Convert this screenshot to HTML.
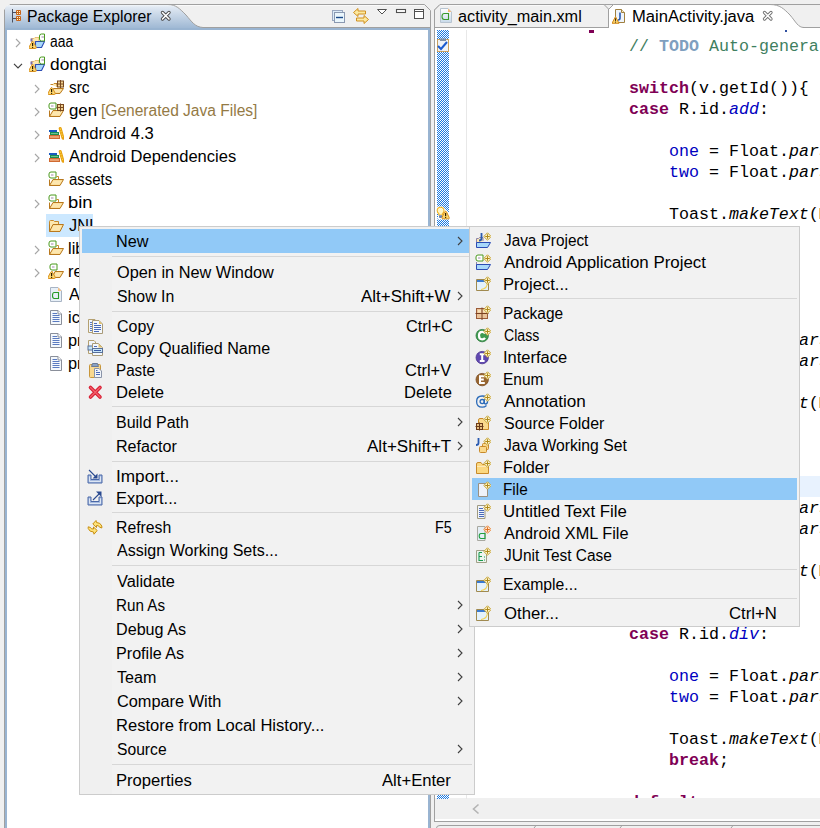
<!DOCTYPE html>
<html><head><meta charset="utf-8">
<style>
*{margin:0;padding:0;box-sizing:border-box}
html,body{width:820px;height:828px;overflow:hidden;background:#f0f0f0;font-family:"Liberation Sans",sans-serif;font-size:16px;color:#000;position:relative}
.abs{position:absolute}
.row{position:absolute;height:23px;line-height:23px;white-space:nowrap}
.mt{position:absolute;height:18px;line-height:18px;white-space:nowrap}
.code{position:absolute;font-family:"Liberation Mono",monospace;font-size:16.667px;line-height:21px;white-space:pre;color:#000}
.kw{color:#7f0055;font-weight:bold}
.fld{color:#0000c0}
.it{font-style:italic}
.cmt{color:#3f7f5f}
.todo{color:#7f9fbf;font-weight:bold}
.menu{position:absolute;background:#f0f0f0;border:1px solid #cccccc}
.hl{background:#91c9f7}
.sep{position:absolute;height:1px;background:#d7d7d7}
</style></head><body>
<!-- LEFT PANEL frame -->
<svg class="abs" style="left:0;top:0" width="440" height="828">
  <defs>
    <linearGradient id="tabg" x1="0" y1="0" x2="0" y2="1">
      <stop offset="0" stop-color="#f2f6fa"/>
      <stop offset="0.08" stop-color="#e1e9f3"/>
      <stop offset="1" stop-color="#99b4d1"/>
    </linearGradient>
  </defs>
  <path d="M4.5,828 L4.5,10 L10,4.5 L424.5,4.5 L430.5,10.5 L430.5,828" fill="#f0f0f0" stroke="#a0a0a0" stroke-width="1"/><path d="M10.5,5.5 H424" stroke="#fafafa"/>
  <path d="M5,30 L5,10 Q5,5 10,5 L168,5 C176,5 180,9 186,15 C192,22 195,27 203,27.5 L430,27.5 L430,30 Z" fill="url(#tabg)"/>
  <path d="M168,4.5 C176,4.5 180,9 186,15 C192,22 195,27 203,27.5 L430,27.5" fill="none" stroke="#a0a0a0" stroke-width="1"/>
  <rect x="5" y="28" width="425" height="2" fill="#99b4d1"/>
  <rect x="5" y="28" width="2" height="800" fill="#99b4d1"/>
  <rect x="428" y="28" width="2" height="800" fill="#99b4d1"/>
  <rect x="7" y="30" width="421" height="800" fill="#fff"/>
</svg>
<div class="abs" style="left:27.21px;top:5px;height:23px;line-height:23px;white-space:nowrap;transform:scaleX(0.9860);transform-origin:0 0;">Package Explorer</div>
<svg class="abs" style="left:15px;top:38px" width="6" height="10" viewBox="0 0 6 10"><path d="M1,1 L5,5 L1,9" fill="none" stroke="#a6a6a6" stroke-width="1.1"/></svg><svg class="abs" style="left:29px;top:33px" width="16" height="16" viewBox="0 0 16 16"><path d="M2.5,5.5 H5 L6,4.5 H10 V9 H2.5 Z" fill="#fde8b0" stroke="#e0b060" stroke-width="0.8"/><rect x="1.5" y="5.5" width="2" height="3" fill="#7a6aa8"/><path d="M6.5,8.5 H15.5 L12.5,14.5 H6.5 Z" fill="#a8d8fa" stroke="#2c4cb4" stroke-width="1.1" stroke-linejoin="round"/><path d="M12.5,1.0 H15.5 V8.0 H12.5 Q10.5,8.0 10.5,6.0 V3.0 Q10.5,1.0 12.5,1.0 Z" fill="#fff" stroke="#4a9a1e" stroke-width="1"/><rect x="12.5" y="3.5" width="2.5" height="1" fill="#a08aa8"/><path d="M3.6,8.6 Q4.2,8.6 4.6,9.4 L7.2,14.2 Q7.6,15.5 6.4,15.5 H0.8 Q-0.4,15.5 0,14.2 L2.6,9.4 Q3,8.6 3.6,8.6 Z" fill="#fcd770" stroke="#d8901e" stroke-width="1"/><rect x="3" y="10" width="1.2" height="3" fill="#2a1a00"/><rect x="3" y="13.8" width="1.2" height="1.1" fill="#2a1a00"/></svg><div class="abs" style="left:50.30px;top:30px;height:23px;line-height:23px;white-space:nowrap;transform:scaleX(0.8658);transform-origin:0 0;">aaa</div><svg class="abs" style="left:13px;top:63px" width="10" height="6" viewBox="0 0 10 6"><path d="M1,0.8 L5,4.8 L9,0.8" fill="none" stroke="#404040" stroke-width="1.2"/></svg><svg class="abs" style="left:29px;top:56px" width="16" height="16" viewBox="0 0 16 16"><path d="M2.5,5.5 H5 L6,4.5 H10 V9 H2.5 Z" fill="#fde8b0" stroke="#e0b060" stroke-width="0.8"/><rect x="1.5" y="5.5" width="2" height="3" fill="#7a6aa8"/><path d="M6.5,8.5 H15.5 L12.5,14.5 H6.5 Z" fill="#a8d8fa" stroke="#2c4cb4" stroke-width="1.1" stroke-linejoin="round"/><path d="M12.5,1.0 H15.5 V8.0 H12.5 Q10.5,8.0 10.5,6.0 V3.0 Q10.5,1.0 12.5,1.0 Z" fill="#fff" stroke="#4a9a1e" stroke-width="1"/><rect x="12.5" y="3.5" width="2.5" height="1" fill="#a08aa8"/><path d="M3.6,8.6 Q4.2,8.6 4.6,9.4 L7.2,14.2 Q7.6,15.5 6.4,15.5 H0.8 Q-0.4,15.5 0,14.2 L2.6,9.4 Q3,8.6 3.6,8.6 Z" fill="#fcd770" stroke="#d8901e" stroke-width="1"/><rect x="3" y="10" width="1.2" height="3" fill="#2a1a00"/><rect x="3" y="13.8" width="1.2" height="1.1" fill="#2a1a00"/></svg><div class="abs" style="left:50.30px;top:53px;height:23px;line-height:23px;white-space:nowrap;transform:scaleX(1.0821);transform-origin:0 0;">dongtai</div><svg class="abs" style="left:34px;top:84px" width="6" height="10" viewBox="0 0 6 10"><path d="M1,1 L5,5 L1,9" fill="none" stroke="#a6a6a6" stroke-width="1.1"/></svg><svg class="abs" style="left:48px;top:79px" width="16" height="16" viewBox="0 0 16 16"><path d="M2.5,5.5 H5 L6,4.5 H9 V8" fill="#fde8b0" stroke="#c88a2a"/><path d="M2.5,9.5 V14.5 H12 L15.5,9.5 H5.5 L2.5,14.5" fill="#fad98c" stroke="#b8781e"/><path d="M6,10.5 H14 L11.5,13.5 H4 Z" fill="#fde7b0"/><rect x="9.5" y="2.0" width="6" height="6" fill="#f0d090" stroke="#7a4a20"/><path d="M12.5,1.0 V9.0 M8.5,5.0 H16.5" stroke="#7a4a20"/><path d="M3.6,8.6 Q4.2,8.6 4.6,9.4 L7.2,14.2 Q7.6,15.5 6.4,15.5 H0.8 Q-0.4,15.5 0,14.2 L2.6,9.4 Q3,8.6 3.6,8.6 Z" fill="#fcd770" stroke="#d8901e" stroke-width="1"/><rect x="3" y="10" width="1.2" height="3" fill="#2a1a00"/><rect x="3" y="13.8" width="1.2" height="1.1" fill="#2a1a00"/></svg><div class="abs" style="left:69.20px;top:76px;height:23px;line-height:23px;white-space:nowrap;transform:scaleX(0.9565);transform-origin:0 0;">src</div><svg class="abs" style="left:34px;top:107px" width="6" height="10" viewBox="0 0 6 10"><path d="M1,1 L5,5 L1,9" fill="none" stroke="#a6a6a6" stroke-width="1.1"/></svg><svg class="abs" style="left:48px;top:102px" width="16" height="16" viewBox="0 0 16 16"><path d="M3.0,1.0 H8.0 V7.0 H3.0 Q1.0,7.0 1.0,5.0 V3.0 Q1.0,1.0 3.0,1.0 Z" fill="#fff" stroke="#4a9a1e" stroke-width="1"/><rect x="3.0" y="3.5" width="2.5" height="1" fill="#a08aa8"/><path d="M1.5,8.5 V14.5 H12 L15.5,8.5 H5 L1.5,14.5" fill="#fad98c" stroke="#b8781e"/><path d="M5.5,9.5 H14 L11.5,13.5 H3 Z" fill="#fde7b0"/><rect x="9.5" y="2.5" width="6" height="6" fill="#f0d090" stroke="#7a4a20"/><path d="M12.5,1.5 V9.5 M8.5,5.5 H16.5" stroke="#7a4a20"/></svg><div class="abs" style="left:69.20px;top:99px;height:23px;line-height:23px;white-space:nowrap;transform:scaleX(1.0505);transform-origin:0 0;">gen</div><div class="abs" style="left:100.73px;top:99px;height:23px;line-height:23px;white-space:nowrap;transform:scaleX(0.9716);transform-origin:0 0;color:#947a45">[Generated Java Files]</div><svg class="abs" style="left:34px;top:130px" width="6" height="10" viewBox="0 0 6 10"><path d="M1,1 L5,5 L1,9" fill="none" stroke="#a6a6a6" stroke-width="1.1"/></svg><svg class="abs" style="left:48px;top:125px" width="16" height="16" viewBox="0 0 16 16"><rect x="1" y="5" width="8" height="2" fill="#1a5ac0"/><rect x="2" y="7" width="9" height="3" fill="#1a9050"/><rect x="3" y="8" width="7" height="1" fill="#70c090"/><rect x="1" y="10" width="11" height="4" fill="#d06a30"/><rect x="2" y="11" width="9" height="2" fill="#e8a070"/><path d="M12.2,3.5 L15,13.2" stroke="#e8a010" stroke-width="3" stroke-linecap="round"/><path d="M12.2,3.5 L15,13.2" stroke="#f8d040" stroke-width="1.2" stroke-dasharray="1.5 1"/></svg><div class="abs" style="left:69.20px;top:122px;height:23px;line-height:23px;white-space:nowrap;transform:scaleX(1.0349);transform-origin:0 0;">Android 4.3</div><svg class="abs" style="left:34px;top:153px" width="6" height="10" viewBox="0 0 6 10"><path d="M1,1 L5,5 L1,9" fill="none" stroke="#a6a6a6" stroke-width="1.1"/></svg><svg class="abs" style="left:48px;top:148px" width="16" height="16" viewBox="0 0 16 16"><rect x="1" y="5" width="8" height="2" fill="#1a5ac0"/><rect x="2" y="7" width="9" height="3" fill="#1a9050"/><rect x="3" y="8" width="7" height="1" fill="#70c090"/><rect x="1" y="10" width="11" height="4" fill="#d06a30"/><rect x="2" y="11" width="9" height="2" fill="#e8a070"/><path d="M12.2,3.5 L15,13.2" stroke="#e8a010" stroke-width="3" stroke-linecap="round"/><path d="M12.2,3.5 L15,13.2" stroke="#f8d040" stroke-width="1.2" stroke-dasharray="1.5 1"/></svg><div class="abs" style="left:69.20px;top:145px;height:23px;line-height:23px;white-space:nowrap;transform:scaleX(1.0328);transform-origin:0 0;">Android Dependencies</div><svg class="abs" style="left:48px;top:171px" width="16" height="16" viewBox="0 0 16 16"><path d="M3.0,1.0 H8.0 V7.0 H3.0 Q1.0,7.0 1.0,5.0 V3.0 Q1.0,1.0 3.0,1.0 Z" fill="#fff" stroke="#4a9a1e" stroke-width="1"/><rect x="3.0" y="3.5" width="2.5" height="1" fill="#a08aa8"/><path d="M8.5,5.5 H10.5 V8" fill="none" stroke="#c88a2a"/><path d="M1.5,8.5 V14.5 H12 L15.5,8.5 H5 L1.5,14.5" fill="#fad98c" stroke="#b8781e"/><path d="M5.5,9.5 H14 L11.5,13.5 H3 Z" fill="#fde7b0"/></svg><div class="abs" style="left:69.20px;top:168px;height:23px;line-height:23px;white-space:nowrap;transform:scaleX(0.9342);transform-origin:0 0;">assets</div><svg class="abs" style="left:34px;top:199px" width="6" height="10" viewBox="0 0 6 10"><path d="M1,1 L5,5 L1,9" fill="none" stroke="#a6a6a6" stroke-width="1.1"/></svg><svg class="abs" style="left:48px;top:194px" width="16" height="16" viewBox="0 0 16 16"><path d="M3.0,1.0 H8.0 V7.0 H3.0 Q1.0,7.0 1.0,5.0 V3.0 Q1.0,1.0 3.0,1.0 Z" fill="#fff" stroke="#4a9a1e" stroke-width="1"/><rect x="3.0" y="3.5" width="2.5" height="1" fill="#a08aa8"/><path d="M8.5,5.5 H10.5 V8" fill="none" stroke="#c88a2a"/><path d="M1.5,8.5 V14.5 H12 L15.5,8.5 H5 L1.5,14.5" fill="#fad98c" stroke="#b8781e"/><path d="M5.5,9.5 H14 L11.5,13.5 H3 Z" fill="#fde7b0"/></svg><div class="abs" style="left:68.05px;top:191px;height:23px;line-height:23px;white-space:nowrap;transform:scaleX(1.1463);transform-origin:0 0;">bin</div><div class="abs" style="left:46px;top:214px;width:47px;height:23px;background:#cce8ff"></div><svg class="abs" style="left:48px;top:217px" width="16" height="16" viewBox="0 0 16 16"><path d="M1.5,13.5 V4.5 Q1.5,3.5 2.5,3.5 H5.5 L6.5,4.5 H10.5 V7.5" fill="#fde8b0" stroke="#c88a2a"/><path d="M1.5,7.5 V14.5 H12 L15.5,7.5 H5 L1.5,14.5" fill="#fad98c" stroke="#b8781e"/><path d="M5.5,8.5 H14 L11.5,13.5 H3 Z" fill="#fde7b0"/></svg><div class="abs" style="left:69.20px;top:214px;height:23px;line-height:23px;white-space:nowrap;transform:scaleX(1.0200);transform-origin:0 0;">JNI</div><svg class="abs" style="left:34px;top:245px" width="6" height="10" viewBox="0 0 6 10"><path d="M1,1 L5,5 L1,9" fill="none" stroke="#a6a6a6" stroke-width="1.1"/></svg><svg class="abs" style="left:48px;top:240px" width="16" height="16" viewBox="0 0 16 16"><path d="M3.0,1.0 H8.0 V7.0 H3.0 Q1.0,7.0 1.0,5.0 V3.0 Q1.0,1.0 3.0,1.0 Z" fill="#fff" stroke="#4a9a1e" stroke-width="1"/><rect x="3.0" y="3.5" width="2.5" height="1" fill="#a08aa8"/><path d="M8.5,5.5 H10.5 V8" fill="none" stroke="#c88a2a"/><path d="M1.5,8.5 V14.5 H12 L15.5,8.5 H5 L1.5,14.5" fill="#fad98c" stroke="#b8781e"/><path d="M5.5,9.5 H14 L11.5,13.5 H3 Z" fill="#fde7b0"/></svg><div class="abs" style="left:68.18px;top:237px;height:23px;line-height:23px;white-space:nowrap;transform:scaleX(1.0200);transform-origin:0 0;">libs</div><svg class="abs" style="left:34px;top:268px" width="6" height="10" viewBox="0 0 6 10"><path d="M1,1 L5,5 L1,9" fill="none" stroke="#a6a6a6" stroke-width="1.1"/></svg><svg class="abs" style="left:48px;top:263px" width="16" height="16" viewBox="0 0 16 16"><path d="M4.0,1.0 H9.0 V7.0 H4.0 Q2.0,7.0 2.0,5.0 V3.0 Q2.0,1.0 4.0,1.0 Z" fill="#fff" stroke="#4a9a1e" stroke-width="1"/><rect x="4.0" y="3.5" width="2.5" height="1" fill="#a08aa8"/><path d="M4.5,8.5 V14.5 H12 L15.5,8.5 H7 L4.5,14.5" fill="#fad98c" stroke="#b8781e"/><path d="M7.5,9.5 H14 L11.5,13.5 H5.5 Z" fill="#fde7b0"/><path d="M3.6,8.6 Q4.2,8.6 4.6,9.4 L7.2,14.2 Q7.6,15.5 6.4,15.5 H0.8 Q-0.4,15.5 0,14.2 L2.6,9.4 Q3,8.6 3.6,8.6 Z" fill="#fcd770" stroke="#d8901e" stroke-width="1"/><rect x="3" y="10" width="1.2" height="3" fill="#2a1a00"/><rect x="3" y="13.8" width="1.2" height="1.1" fill="#2a1a00"/></svg><div class="abs" style="left:68.18px;top:260px;height:23px;line-height:23px;white-space:nowrap;transform:scaleX(1.0200);transform-origin:0 0;">res</div><svg class="abs" style="left:48px;top:286px" width="16" height="16" viewBox="0 0 16 16"><path d="M2.5,1.5 H10 L13.5,5 V15.5 H2.5 Z" fill="#e8f0f8" stroke="#a8b4c4"/><path d="M10,1.5 V5 H13.5 Z" fill="#f8c080"/><path d="M6.2,6.5 H10.5 V12.5 H6.2 Q4.5,12.5 4.5,9.5 Q4.5,6.5 6.2,6.5 Z" fill="none" stroke="#2a9a2a" stroke-width="1.1"/></svg><div class="abs" style="left:69.20px;top:283px;height:23px;line-height:23px;white-space:nowrap;transform:scaleX(1.0200);transform-origin:0 0;">AndroidManifest.xml</div><svg class="abs" style="left:48px;top:309px" width="16" height="16" viewBox="0 0 16 16"><path d="M2.5,1.5 H10 L13.5,5 V15.5 H2.5 Z" fill="#f4f8fc" stroke="#8a8f9a"/><path d="M10,1.5 V5 H13.5" fill="#fff" stroke="#8a8f9a"/><path d="M4.5,4.5 H9 M4.5,6.5 H11.5 M4.5,8.5 H11.5 M4.5,10.5 H11.5 M4.5,12.5 H11.5" stroke="#5a7ac0"/></svg><div class="abs" style="left:68.18px;top:306px;height:23px;line-height:23px;white-space:nowrap;transform:scaleX(1.0200);transform-origin:0 0;">ic_launcher-web.png</div><svg class="abs" style="left:48px;top:332px" width="16" height="16" viewBox="0 0 16 16"><path d="M2.5,1.5 H10 L13.5,5 V15.5 H2.5 Z" fill="#f4f8fc" stroke="#8a8f9a"/><path d="M10,1.5 V5 H13.5" fill="#fff" stroke="#8a8f9a"/><path d="M4.5,4.5 H9 M4.5,6.5 H11.5 M4.5,8.5 H11.5 M4.5,10.5 H11.5 M4.5,12.5 H11.5" stroke="#5a7ac0"/></svg><div class="abs" style="left:68.18px;top:329px;height:23px;line-height:23px;white-space:nowrap;transform:scaleX(1.0200);transform-origin:0 0;">proguard-project.txt</div><svg class="abs" style="left:48px;top:355px" width="16" height="16" viewBox="0 0 16 16"><path d="M2.5,1.5 H10 L13.5,5 V15.5 H2.5 Z" fill="#f4f8fc" stroke="#8a8f9a"/><path d="M10,1.5 V5 H13.5" fill="#fff" stroke="#8a8f9a"/><path d="M4.5,4.5 H9 M4.5,6.5 H11.5 M4.5,8.5 H11.5 M4.5,10.5 H11.5 M4.5,12.5 H11.5" stroke="#5a7ac0"/></svg><div class="abs" style="left:68.18px;top:352px;height:23px;line-height:23px;white-space:nowrap;transform:scaleX(1.0200);transform-origin:0 0;">project.properties</div>

<!-- EDITOR frame -->
<svg class="abs" style="left:430px;top:0" width="390" height="828">
  <path d="M4.5,828 L4.5,10 L10,4.5 L390,4.5" fill="#f0f0f0" stroke="#a0a0a0"/>
</svg>
<div class="abs" style="left:435px;top:28px;width:385px;height:770px;background:#fff;overflow:hidden">
  <div class="abs" style="left:0;top:448px;width:385px;height:21px;background:#e8f2fe"></div>
  <div class="abs" style="left:154px;top:2px;width:5px;height:3px;background:#7f0055"></div><div class="abs" style="left:350px;top:2px;width:2px;height:2px;background:#3050a0"></div><div class="code" style="left:34px;top:8px">                <span class="cmt">// </span><span class="todo">TODO</span><span class="cmt"> Auto-generated method stub</span>

                <span class="kw">switch</span>(v.getId()){
                <span class="kw">case</span> R.id.<span class="fld it">add</span>:

                    <span class="fld">one</span> = Float.<span class="it">parseFloat</span>(et1.getText().toString());
                    <span class="fld">two</span> = Float.<span class="it">parseFloat</span>(et1.getText().toString());

                    Toast.<span class="it">makeText</span>(MainActivity.this, "", Toast.LENGTH_SHORT).show();
                    <span class="kw">break</span>;

                <span class="kw">case</span> R.id.<span class="fld it">sub</span>:


                    <span class="fld">one</span> = Float.<span class="it">parseFloat</span>(et1.getText().toString());
                    <span class="fld">two</span> = Float.<span class="it">parseFloat</span>(et1.getText().toString());

                    Toast.<span class="it">makeText</span>(MainActivity.this, "", Toast.LENGTH_SHORT).show();
                    <span class="kw">break</span>;

                <span class="kw">case</span> R.id.<span class="fld it">mul</span>:

                    <span class="fld">one</span> = Float.<span class="it">parseFloat</span>(et1.getText().toString());
                    <span class="fld">two</span> = Float.<span class="it">parseFloat</span>(et1.getText().toString());

                    Toast.<span class="it">makeText</span>(MainActivity.this, "", Toast.LENGTH_SHORT).show();
                    <span class="kw">break</span>;

                <span class="kw">case</span> R.id.<span class="fld it">div</span>:

                    <span class="fld">one</span> = Float.<span class="it">parseFloat</span>(et1.getText().toString());
                    <span class="fld">two</span> = Float.<span class="it">parseFloat</span>(et1.getText().toString());

                    Toast.<span class="it">makeText</span>(MainActivity.this, "", Toast.LENGTH_SHORT).show();
                    <span class="kw">break</span>;

                <span class="kw">default</span>:</div>
</div>


<!-- left header icons -->
<svg class="abs" style="left:8px;top:4px" width="20" height="22"><path d="M4.5,5 V18.5 M4.5,8.5 H8 M4.5,14.5 H8" stroke="#4a5060" stroke-width="1"/><rect x="8" y="6" width="5" height="5" rx="1" fill="#c8641a"/><rect x="8" y="12" width="5" height="5" rx="1" fill="#c8641a"/><g fill="#fff6c0"><rect x="9" y="7" width="1" height="1"/><rect x="11" y="7" width="1" height="1"/><rect x="9" y="9" width="1" height="1"/><rect x="11" y="9" width="1" height="1"/><rect x="9" y="13" width="1" height="1"/><rect x="11" y="13" width="1" height="1"/><rect x="9" y="15" width="1" height="1"/><rect x="11" y="15" width="1" height="1"/></g></svg>
<svg class="abs" style="left:160px;top:10px" width="12" height="12"><path d="M2.5,2.5 L9,9 M9,2.5 L2.5,9" stroke="#4a4a4a" stroke-width="3.4" stroke-linecap="round"/><path d="M2.5,2.5 L9,9 M9,2.5 L2.5,9" stroke="#fff" stroke-width="1.6" stroke-linecap="round"/></svg>
<svg class="abs" style="left:328px;top:4px" width="104" height="24">
 <rect x="4.5" y="6.5" width="10" height="10" fill="#dcecf8" stroke="#9aa8c0"/>
 <rect x="6.5" y="8.5" width="10" height="10" fill="#eaf6fc" stroke="#8a98b0"/>
 <path d="M8,13.5 H15" stroke="#1a4a8a" stroke-width="1.4"/>
 <path d="M25.5,8.5 L30,4.5 V7 H37.5 V10 H30 V12.5 Z" fill="#fce9a0" stroke="#d09020" stroke-linejoin="round"/>
 <path d="M40.5,15.5 L36,11.5 V14 H28.5 V17 H36 V19.5 Z" fill="#fce9a0" stroke="#d09020" stroke-linejoin="round"/>
 <path d="M49.5,5.5 H58.5 L54,10 Z" fill="#fff" stroke="#505050" stroke-linejoin="round"/>
 <rect x="68.5" y="5.5" width="9" height="3" fill="#fff" stroke="#505050" stroke-width="1.1"/>
 <rect x="86.5" y="5.5" width="9" height="9" fill="#fff" stroke="#505050"/>
 <path d="M86.5,7.5 H95.5" stroke="#505050" stroke-width="1"/>
</svg>

<!-- EDITOR tabs -->
<svg class="abs" style="left:430px;top:0" width="390" height="30">
 <!-- active tab white -->
 <path d="M179,28 V9 L183.5,4.5 L340,4.5 C350,4.5 354,9 360,15 C366,22 368,27.5 374,27.5 L390,27.5 V28 Z" fill="#fff"/>
 <path d="M179,9 L183.5,4.5 L340,4.5 C350,4.5 354,9 360,15 C366,22 368,27.5 374,27.5 L390,27.5" fill="none" stroke="#a0a0a0"/>
 <!-- inactive tab -->
 <path d="M4.5,28 V10 L10,4.5 L174,4.5 L178.5,9 V27.5 H4.5" fill="#f0f0f0" stroke="#a0a0a0"/><path d="M10.5,5.5 H173.5" stroke="#fafafa"/>
 <rect x="4" y="27" width="175" height="1" fill="#a0a0a0"/>
</svg>
<svg class="abs" style="left:430px;top:0" width="390" height="30"><path d="M373,27.5 H390" stroke="#a0a0a0"/><rect x="373" y="5" width="17" height="22" fill="#f0f0f0" opacity="0"/></svg>

<div class="abs" style="left:458.00px;top:5px;height:23px;line-height:23px;white-space:nowrap;transform:scaleX(1.0161);transform-origin:0 0;">activity_main.xml</div>
<div class="abs" style="left:631.66px;top:5px;height:23px;line-height:23px;white-space:nowrap;transform:scaleX(1.0371);transform-origin:0 0;">MainActivity.java</div>
<svg class="abs" style="left:438px;top:7px" width="16" height="16"><defs><linearGradient id="xg" x1="0" y1="0" x2="0" y2="1"><stop offset="0" stop-color="#ffffff"/><stop offset="1" stop-color="#c8daea"/></linearGradient></defs><path d="M2.5,1.5 H10 L13.5,5 V15.5 H2.5 Z" fill="url(#xg)" stroke="#b8c4d0"/><path d="M10,1.5 V5 H13.5 Z" fill="#f4b878"/><path d="M6.2,6.5 H10.5 V12.5 H6.2 Q4,12.5 4,9.5 Q4,6.5 6.2,6.5 Z" fill="none" stroke="#3a9a2a" stroke-width="1.1"/></svg>
<svg class="abs" style="left:612px;top:8px" width="16" height="16"><path d="M3.5,1.5 H9.5 L12.5,4.5 V14.5 H3.5 Z" fill="#eef4fb" stroke="#a08040"/><path d="M9.5,1.5 V4.5 H12.5" fill="#f8e8c0" stroke="#a08040"/><path d="M8,4.5 V10 Q8,12 6,12" fill="none" stroke="#2a5ab0" stroke-width="1.6"/><path d="M3.5,8.6 L7,15.3 H0 Z" fill="#fbd36b" stroke="#d18a1c" stroke-linejoin="round"/><rect x="3" y="10.3" width="1" height="2.6" fill="#3a2a10"/><rect x="3" y="13.6" width="1" height="1" fill="#3a2a10"/></svg>
<svg class="abs" style="left:762px;top:10px" width="12" height="12"><path d="M2.5,2.5 L9,9 M9,2.5 L2.5,9" stroke="#6e6e6e" stroke-width="3.2" stroke-linecap="round"/><path d="M2.5,2.5 L9,9 M9,2.5 L2.5,9" stroke="#fff" stroke-width="1.5" stroke-linecap="round"/></svg>
<!-- ruler -->
<svg class="abs" style="left:437px;top:30px" width="12" height="769"><defs><pattern id="dots" width="2" height="2" patternUnits="userSpaceOnUse"><rect x="0" y="0" width="1" height="1" fill="#1a78e0"/><rect x="1" y="1" width="1" height="1" fill="#1a78e0"/><rect x="1" y="0" width="1" height="1" fill="#fff"/><rect x="0" y="1" width="1" height="1" fill="#fff"/></pattern></defs><rect width="12" height="769" fill="url(#dots)"/></svg>
<div class="abs" style="left:466px;top:30px;width:1px;height:769px;background:#e8e8e8"></div>
<!-- task icon on ruler -->
<svg class="abs" style="left:435px;top:36px" width="16" height="16"><rect x="2.5" y="3.5" width="11" height="12" fill="#eef2f8" stroke="#c8a060"/><path d="M5,2.5 H11 V5 H5 Z" fill="#8090a8"/><path d="M3,10 L6,13 L12,6" fill="none" stroke="#1a5ad0" stroke-width="2"/></svg>
<!-- quickfix warning icon -->
<svg class="abs" style="left:436px;top:206px" width="16" height="16"><path d="M1,0.6 H7 L13,6.6 V13.6 H1 Z" fill="#fff"/><path d="M1.5,8 V12.5" stroke="#1a78e0" stroke-dasharray="1 1"/><path d="M4.6,1.2 Q8,1.2 8,4.4 Q8,6.4 6.4,7.6 V9 H2.8 V7.6 Q1.2,6.4 1.2,4.4 Q1.2,1.2 4.6,1.2 Z" fill="#fff6c8" stroke="#f0b428" stroke-width="1.1"/><path d="M3,9.2 H6.2 V11.5 Q4.6,12.6 3,11.5 Z" fill="#6a84b8"/><path d="M9.6,5.2 Q10.2,5.2 10.6,6 L13.2,11.6 Q13.6,12.8 12.4,12.8 H6.8 Q5.6,12.8 6,11.6 L8.6,6 Q9,5.2 9.6,5.2 Z" fill="#fcd770" stroke="#d8901e"/><rect x="9" y="7" width="1.2" height="3" fill="#2a1a00"/><rect x="9" y="10.8" width="1.2" height="1.1" fill="#2a1a00"/></svg>
<!-- horizontal scrollbar -->
<div class="abs" style="left:437px;top:799px;width:383px;height:20px;background:#f0f0f0"></div>
<svg class="abs" style="left:470px;top:803px" width="12" height="12"><path d="M8.5,1.5 L3.5,6 L8.5,10.5" fill="none" stroke="#b4b4b4" stroke-width="1.6"/></svg>
<div class="abs" style="left:435px;top:819px;width:385px;height:2px;background:#fff"></div>
<div class="abs" style="left:434px;top:821px;width:386px;height:1px;background:#a0a0a0"></div>
<div class="abs" style="left:431px;top:822px;width:389px;height:6px;background:#f0f0f0"></div>
<svg class="abs" style="left:430px;top:822px" width="390" height="6"><path d="M6.5,6 Q6.5,3.5 10,3.5 L390,3.5" fill="none" stroke="#a0a0a0"/><path d="M104,6 L106,3.5 M190,6 L192,3.5 M301,6 L303,3.5" stroke="#a0a0a0"/></svg>

<!-- MAIN MENU -->
<div class="menu" style="left:79px;top:226px;width:396px;height:569px"><div class="abs" style="left:32px;top:0;width:362px;height:567px;background:#f2f2f2"></div></div>
<div class="abs hl" style="left:82px;top:229px;width:390px;height:24px"></div><div class="abs" style="left:115.59px;top:233px;height:18px;line-height:18px;white-space:nowrap;transform:scaleX(1.0142);transform-origin:0 0;">New</div><svg class="abs" style="left:456.5px;top:236px" width="6" height="10" viewBox="0 0 6 10"><path d="M1,1 L5,5 L1,9" fill="none" stroke="#404040" stroke-width="1.1"/></svg><div class="sep" style="left:112px;top:256px;width:360px"></div><div class="abs" style="left:116.60px;top:264px;height:18px;line-height:18px;white-space:nowrap;transform:scaleX(1.0195);transform-origin:0 0;">Open in New Window</div><div class="abs" style="left:116.60px;top:288px;height:18px;line-height:18px;white-space:nowrap;transform:scaleX(0.9892);transform-origin:0 0;">Show In</div><div class="abs" style="left:361.40px;top:288px;height:18px;line-height:18px;white-space:nowrap;transform:scaleX(1.0589);transform-origin:0 0;">Alt+Shift+W</div><svg class="abs" style="left:456.5px;top:291px" width="6" height="10" viewBox="0 0 6 10"><path d="M1,1 L5,5 L1,9" fill="none" stroke="#404040" stroke-width="1.1"/></svg><div class="sep" style="left:112px;top:311px;width:360px"></div><div class="abs" style="left:116.60px;top:318px;height:18px;line-height:18px;white-space:nowrap;transform:scaleX(0.9986);transform-origin:0 0;">Copy</div><div class="abs" style="left:405.60px;top:318px;height:18px;line-height:18px;white-space:nowrap;transform:scaleX(1.0215);transform-origin:0 0;">Ctrl+C</div><svg class="abs" style="left:87px;top:318px" width="16" height="16" viewBox="0 0 16 16"><path d="M1.5,1.5 H8 L9.5,3 V14.5 H1.5 Z" fill="#f0f4fa" stroke="#b4a070"/><path d="M3,4.5 H6 M3,6.5 H6 M3,8.5 H6 M3,10.5 H6 M3,12.5 H6" stroke="#5a7ac0"/><path d="M5.5,2.5 H12 L15.5,6 V15.5 H5.5 Z" fill="#f4f8fd" stroke="#a89a78"/><path d="M12,2.5 V6 H15.5 Z" fill="#e0c070"/><path d="M7,5.5 H10 M7,7.5 H14 M7,9.5 H14 M7,11.5 H14 M7,13.5 H12" stroke="#4a6ab8"/></svg><div class="abs" style="left:116.60px;top:340px;height:18px;line-height:18px;white-space:nowrap;transform:scaleX(1.0068);transform-origin:0 0;">Copy Qualified Name</div><svg class="abs" style="left:87px;top:340px" width="16" height="16" viewBox="0 0 16 16"><path d="M1.5,0.5 H7 L8.5,2 V13.5 H1.5 Z" fill="#f0f4fa" stroke="#b4a070"/><rect x="1" y="6" width="8" height="4" fill="#c0e4f8" stroke="#5a7098"/><path d="M5.5,3.5 H11.5 L15.5,7.5 V15.5 H5.5 Z" fill="#f4f8fd" stroke="#a89a78"/><path d="M11.5,3.5 V7.5 H15.5 Z" fill="#e0c070"/><path d="M7,6.5 H10" stroke="#4a6ab8"/><rect x="5.5" y="8.5" width="10" height="4" fill="#c8e8fa" stroke="#5a7098"/><path d="M7,10.5 H14" stroke="#3a5aa8"/></svg><div class="abs" style="left:115.65px;top:362px;height:18px;line-height:18px;white-space:nowrap;transform:scaleX(0.9496);transform-origin:0 0;">Paste</div><div class="abs" style="left:405.30px;top:362px;height:18px;line-height:18px;white-space:nowrap;transform:scaleX(1.0282);transform-origin:0 0;">Ctrl+V</div><svg class="abs" style="left:87px;top:362px" width="16" height="16" viewBox="0 0 16 16"><rect x="2.5" y="2.5" width="11" height="13" rx="1" fill="#f8d890" stroke="#c8963a"/><path d="M4.5,4.5 L5.5,1.5 H10.5 L11.5,4.5 Z" fill="#8aa2c4" stroke="#6a7a98"/><path d="M7.5,6.5 H12 L14.5,9 V15.5 H7.5 Z" fill="#f0f4fa" stroke="#8a94a8"/><path d="M9,8.5 H10.5 M9,10.5 H13 M9,12.5 H13" stroke="#4a6ab8"/></svg><div class="abs" style="left:115.56px;top:384px;height:18px;line-height:18px;white-space:nowrap;transform:scaleX(1.0386);transform-origin:0 0;">Delete</div><div class="abs" style="left:403.87px;top:384px;height:18px;line-height:18px;white-space:nowrap;transform:scaleX(1.0341);transform-origin:0 0;">Delete</div><svg class="abs" style="left:87px;top:384px" width="16" height="16" viewBox="0 0 16 16"><path d="M3.5,3.5 L13,13 M13,3.5 L3.5,13" stroke="#d81e34" stroke-width="3.6" stroke-linecap="round"/><path d="M3.5,3.5 L13,13 M13,3.5 L3.5,13" stroke="#f2606a" stroke-width="1.4" stroke-linecap="round"/></svg><div class="sep" style="left:112px;top:406px;width:360px"></div><div class="abs" style="left:115.60px;top:414px;height:18px;line-height:18px;white-space:nowrap;transform:scaleX(0.9995);transform-origin:0 0;">Build Path</div><svg class="abs" style="left:456.5px;top:417px" width="6" height="10" viewBox="0 0 6 10"><path d="M1,1 L5,5 L1,9" fill="none" stroke="#404040" stroke-width="1.1"/></svg><div class="abs" style="left:115.59px;top:438px;height:18px;line-height:18px;white-space:nowrap;transform:scaleX(1.0060);transform-origin:0 0;">Refactor</div><div class="abs" style="left:367.30px;top:438px;height:18px;line-height:18px;white-space:nowrap;transform:scaleX(1.0646);transform-origin:0 0;">Alt+Shift+T</div><svg class="abs" style="left:456.5px;top:441px" width="6" height="10" viewBox="0 0 6 10"><path d="M1,1 L5,5 L1,9" fill="none" stroke="#404040" stroke-width="1.1"/></svg><div class="sep" style="left:112px;top:461px;width:360px"></div><div class="abs" style="left:115.52px;top:468px;height:18px;line-height:18px;white-space:nowrap;transform:scaleX(1.0759);transform-origin:0 0;">Import...</div><svg class="abs" style="left:87px;top:468px" width="16" height="16" viewBox="0 0 16 16"><path d="M1,7 H4 V11.5 H12 V7 H15 V15 H1 Z" fill="#a8bce0" stroke="#4a68a8"/><path d="M2.5,8.5 V13.5 H13.5 V8.5" fill="none" stroke="#dce6f4"/><path d="M2,2 L8.5,8.5" stroke="#2a4a90" stroke-width="1.1"/><path d="M10.5,5.5 V10.5 H5.5 Z" fill="#2a4a90"/></svg><div class="abs" style="left:115.57px;top:490px;height:18px;line-height:18px;white-space:nowrap;transform:scaleX(1.0292);transform-origin:0 0;">Export...</div><svg class="abs" style="left:87px;top:490px" width="16" height="16" viewBox="0 0 16 16"><path d="M1,7 H4 V11.5 H12 V7 H15 V15 H1 Z" fill="#a8bce0" stroke="#4a68a8"/><path d="M2.5,8.5 V13.5 H13.5 V8.5" fill="none" stroke="#dce6f4"/><path d="M6,10 L12.5,3.5" stroke="#2a4a90" stroke-width="1.1"/><path d="M9,1.5 H14.5 V7 Z" fill="#2a4a90"/></svg><div class="sep" style="left:112px;top:512px;width:360px"></div><div class="abs" style="left:115.61px;top:519px;height:18px;line-height:18px;white-space:nowrap;transform:scaleX(0.9866);transform-origin:0 0;">Refresh</div><div class="abs" style="left:435.01px;top:519px;height:18px;line-height:18px;white-space:nowrap;transform:scaleX(0.8946);transform-origin:0 0;">F5</div><svg class="abs" style="left:87px;top:519px" width="16" height="16" viewBox="0 0 16 16"><path d="M5.8,5 L9,1.5 L9.5,3.5 Q13.5,3.5 14.8,7 V9 L12.5,8.2 Q12,6.3 9.5,6.5 L9.5,8.5 Z" fill="#fde27a" stroke="#c88e10" stroke-width="1" stroke-linejoin="round"/><path d="M10.2,11.5 L7,15.2 L6.5,13 Q2.5,13 1.2,9.5 V7.8 L3.5,8.5 Q4,10.3 6.5,10 L6.5,8 Z" fill="#fde27a" stroke="#c88e10" stroke-width="1" stroke-linejoin="round"/></svg><div class="abs" style="left:116.60px;top:542px;height:18px;line-height:18px;white-space:nowrap;transform:scaleX(1.0031);transform-origin:0 0;">Assign Working Sets...</div><div class="sep" style="left:112px;top:565px;width:360px"></div><div class="abs" style="left:116.60px;top:573px;height:18px;line-height:18px;white-space:nowrap;transform:scaleX(1.0223);transform-origin:0 0;">Validate</div><div class="abs" style="left:115.65px;top:597px;height:18px;line-height:18px;white-space:nowrap;transform:scaleX(0.9501);transform-origin:0 0;">Run As</div><svg class="abs" style="left:456.5px;top:600px" width="6" height="10" viewBox="0 0 6 10"><path d="M1,1 L5,5 L1,9" fill="none" stroke="#404040" stroke-width="1.1"/></svg><div class="abs" style="left:115.59px;top:621px;height:18px;line-height:18px;white-space:nowrap;transform:scaleX(1.0092);transform-origin:0 0;">Debug As</div><svg class="abs" style="left:456.5px;top:624px" width="6" height="10" viewBox="0 0 6 10"><path d="M1,1 L5,5 L1,9" fill="none" stroke="#404040" stroke-width="1.1"/></svg><div class="abs" style="left:115.59px;top:645px;height:18px;line-height:18px;white-space:nowrap;transform:scaleX(1.0079);transform-origin:0 0;">Profile As</div><svg class="abs" style="left:456.5px;top:648px" width="6" height="10" viewBox="0 0 6 10"><path d="M1,1 L5,5 L1,9" fill="none" stroke="#404040" stroke-width="1.1"/></svg><div class="abs" style="left:116.60px;top:669px;height:18px;line-height:18px;white-space:nowrap;transform:scaleX(1.0052);transform-origin:0 0;">Team</div><svg class="abs" style="left:456.5px;top:672px" width="6" height="10" viewBox="0 0 6 10"><path d="M1,1 L5,5 L1,9" fill="none" stroke="#404040" stroke-width="1.1"/></svg><div class="abs" style="left:116.60px;top:693px;height:18px;line-height:18px;white-space:nowrap;transform:scaleX(1.0202);transform-origin:0 0;">Compare With</div><svg class="abs" style="left:456.5px;top:696px" width="6" height="10" viewBox="0 0 6 10"><path d="M1,1 L5,5 L1,9" fill="none" stroke="#404040" stroke-width="1.1"/></svg><div class="abs" style="left:115.57px;top:717px;height:18px;line-height:18px;white-space:nowrap;transform:scaleX(1.0342);transform-origin:0 0;">Restore from Local History...</div><div class="abs" style="left:116.60px;top:741px;height:18px;line-height:18px;white-space:nowrap;transform:scaleX(0.9784);transform-origin:0 0;">Source</div><svg class="abs" style="left:456.5px;top:744px" width="6" height="10" viewBox="0 0 6 10"><path d="M1,1 L5,5 L1,9" fill="none" stroke="#404040" stroke-width="1.1"/></svg><div class="sep" style="left:112px;top:764px;width:360px"></div><div class="abs" style="left:115.56px;top:772px;height:18px;line-height:18px;white-space:nowrap;transform:scaleX(1.0386);transform-origin:0 0;">Properties</div><div class="abs" style="left:382.20px;top:772px;height:18px;line-height:18px;white-space:nowrap;transform:scaleX(1.0399);transform-origin:0 0;">Alt+Enter</div>
<!-- SUB MENU -->
<div class="menu" style="left:469px;top:226px;width:331px;height:401px"><div class="abs" style="left:30px;top:0;width:299px;height:399px;background:#f2f2f2"></div></div>
<div class="abs" style="left:504.40px;top:232px;height:18px;line-height:18px;white-space:nowrap;transform:scaleX(0.9583);transform-origin:0 0;">Java Project</div><svg class="abs" style="left:475px;top:232px" width="16" height="16" viewBox="0 0 16 16"><path d="M1.5,13 V6.5 H3.5 L4.5,5.5 H8 V9" fill="#fde8b0" stroke="#8a82a8"/><path d="M1.5,10.5 H15.5 L12.5,15.5 H1.5 Z" fill="#a8d8fa" stroke="#2c4cb4" stroke-linejoin="round"/><path d="M6.5,1 V6.5 Q6.5,8.5 4,8.5" fill="none" stroke="#2a5ab0" stroke-width="1.8"/><path d="M12.5,0.8 L16.2,4.5 L12.5,8.2 L8.8,4.5 Z" fill="#fff8d8" stroke="#c4a030" stroke-width="1" stroke-linejoin="round"/><path d="M12.5,2.2 V6.8 M10.2,4.5 H14.8" stroke="#b08a18" stroke-width="1.1"/></svg><div class="abs" style="left:504.40px;top:254px;height:18px;line-height:18px;white-space:nowrap;transform:scaleX(1.0562);transform-origin:0 0;">Android Application Project</div><svg class="abs" style="left:475px;top:254px" width="16" height="16" viewBox="0 0 16 16"><path d="M3.0,1.0 H8.0 V7.0 H3.0 Q1.0,7.0 1.0,5.0 V3.0 Q1.0,1.0 3.0,1.0 Z" fill="#fff" stroke="#4a9a1e" stroke-width="1"/><rect x="3.0" y="3.5" width="2.5" height="1" fill="#a08aa8"/><path d="M1.5,13 V8" stroke="#8a82a8"/><path d="M1.5,10.5 H15.5 L12.5,15.5 H1.5 Z" fill="#a8d8fa" stroke="#2c4cb4" stroke-linejoin="round"/><path d="M12.5,0.8 L16.2,4.5 L12.5,8.2 L8.8,4.5 Z" fill="#fff8d8" stroke="#c4a030" stroke-width="1" stroke-linejoin="round"/><path d="M12.5,2.2 V6.8 M10.2,4.5 H14.8" stroke="#b08a18" stroke-width="1.1"/></svg><div class="abs" style="left:503.36px;top:276px;height:18px;line-height:18px;white-space:nowrap;transform:scaleX(1.0414);transform-origin:0 0;">Project...</div><svg class="abs" style="left:475px;top:276px" width="16" height="16" viewBox="0 0 16 16"><path d="M1.5,3.5 H13.5 V14.5 H1.5 Z" fill="#e4f2fc" stroke="#a08a50"/><rect x="2" y="4" width="11" height="2" fill="#3a7ad0"/><path d="M12.5,6 Q12.5,13 6,13.5" fill="none" stroke="#f4d050" stroke-width="1.1"/><path d="M12.5,0.8 L16.2,4.5 L12.5,8.2 L8.8,4.5 Z" fill="#fff8d8" stroke="#c4a030" stroke-width="1" stroke-linejoin="round"/><path d="M12.5,2.2 V6.8 M10.2,4.5 H14.8" stroke="#b08a18" stroke-width="1.1"/></svg><div class="sep" style="left:500px;top:298px;width:297px"></div><div class="abs" style="left:503.44px;top:305px;height:18px;line-height:18px;white-space:nowrap;transform:scaleX(0.9647);transform-origin:0 0;">Package</div><svg class="abs" style="left:475px;top:305px" width="16" height="16" viewBox="0 0 16 16"><rect x="1.5" y="3.5" width="11" height="10" fill="#eac49a" stroke="#9a5a38"/><path d="M7,2.5 V15 M0.5,8.5 H13.5" stroke="#7a4020"/><rect x="3" y="5" width="3" height="2.5" fill="#f8e0b8"/><rect x="8" y="5" width="3" height="2.5" fill="#f8e0b8"/><path d="M12.5,0.8 L16.2,4.5 L12.5,8.2 L8.8,4.5 Z" fill="#fff8d8" stroke="#c4a030" stroke-width="1" stroke-linejoin="round"/><path d="M12.5,2.2 V6.8 M10.2,4.5 H14.8" stroke="#b08a18" stroke-width="1.1"/></svg><div class="abs" style="left:504.40px;top:327px;height:18px;line-height:18px;white-space:nowrap;transform:scaleX(0.8823);transform-origin:0 0;">Class</div><svg class="abs" style="left:475px;top:327px" width="16" height="16" viewBox="0 0 16 16"><circle cx="7.2" cy="8.6" r="6.2" fill="#3e9a50" stroke="#2a7a3a" stroke-width="0.8"/><path d="M10,6.5 Q9,4.8 7.2,4.8 Q4,4.8 4,8.6 Q4,12.4 7.2,12.4 Q9,12.4 10,10.8" fill="none" stroke="#fff" stroke-width="2.2"/><path d="M12.5,0.8 L16.2,4.5 L12.5,8.2 L8.8,4.5 Z" fill="#fff8d8" stroke="#c4a030" stroke-width="1" stroke-linejoin="round"/><path d="M12.5,2.2 V6.8 M10.2,4.5 H14.8" stroke="#b08a18" stroke-width="1.1"/></svg><div class="abs" style="left:503.37px;top:349px;height:18px;line-height:18px;white-space:nowrap;transform:scaleX(1.0300);transform-origin:0 0;">Interface</div><svg class="abs" style="left:475px;top:349px" width="16" height="16" viewBox="0 0 16 16"><circle cx="7.2" cy="8.6" r="6.2" fill="#6048b0" stroke="#4a3490" stroke-width="0.8"/><path d="M4.8,5.2 H9.6 M7.2,5.2 V12 M4.8,12 H9.6" stroke="#fff" stroke-width="2"/><path d="M12.5,0.8 L16.2,4.5 L12.5,8.2 L8.8,4.5 Z" fill="#fff8d8" stroke="#c4a030" stroke-width="1" stroke-linejoin="round"/><path d="M12.5,2.2 V6.8 M10.2,4.5 H14.8" stroke="#b08a18" stroke-width="1.1"/></svg><div class="abs" style="left:503.43px;top:371px;height:18px;line-height:18px;white-space:nowrap;transform:scaleX(0.9662);transform-origin:0 0;">Enum</div><svg class="abs" style="left:475px;top:371px" width="16" height="16" viewBox="0 0 16 16"><circle cx="7.2" cy="8.6" r="6.2" fill="#986630" stroke="#7a4a20" stroke-width="0.8"/><path d="M9.8,5.2 H5 V12 H9.8 M5,8.6 H8.8" fill="none" stroke="#fff" stroke-width="2"/><path d="M12.5,0.8 L16.2,4.5 L12.5,8.2 L8.8,4.5 Z" fill="#fff8d8" stroke="#c4a030" stroke-width="1" stroke-linejoin="round"/><path d="M12.5,2.2 V6.8 M10.2,4.5 H14.8" stroke="#b08a18" stroke-width="1.1"/></svg><div class="abs" style="left:504.40px;top:393px;height:18px;line-height:18px;white-space:nowrap;transform:scaleX(1.0700);transform-origin:0 0;">Annotation</div><svg class="abs" style="left:475px;top:393px" width="16" height="16" viewBox="0 0 16 16"><path d="M11.5,12.5 Q9.8,14.2 7.2,14.2 Q1.6,14.2 1.6,8.6 Q1.6,3 7.2,3 Q12.6,3 12.6,8 Q12.6,11 10.5,11 Q9.2,11 9.2,9.5 V6" fill="none" stroke="#2a6ab8" stroke-width="1.3"/><circle cx="7.2" cy="8.6" r="2.1" fill="none" stroke="#2a6ab8" stroke-width="1.3"/><path d="M12.5,0.8 L16.2,4.5 L12.5,8.2 L8.8,4.5 Z" fill="#fff8d8" stroke="#c4a030" stroke-width="1" stroke-linejoin="round"/><path d="M12.5,2.2 V6.8 M10.2,4.5 H14.8" stroke="#b08a18" stroke-width="1.1"/></svg><div class="abs" style="left:504.40px;top:415px;height:18px;line-height:18px;white-space:nowrap;transform:scaleX(0.9984);transform-origin:0 0;">Source Folder</div><svg class="abs" style="left:475px;top:415px" width="16" height="16" viewBox="0 0 16 16"><path d="M3.5,13.5 V5 Q3.5,3.5 5,3.5 H8 L9,4.5 H13.5 V14.5 H3.5 Z" fill="#fad98c" stroke="#c88a2a"/><rect x="1.5" y="8.5" width="6" height="6" fill="#e8c080" stroke="#6a3a18"/><path d="M4.5,7.5 V15.5 M0.5,11.5 H8.5" stroke="#6a3a18"/><path d="M12.5,0.8 L16.2,4.5 L12.5,8.2 L8.8,4.5 Z" fill="#fff8d8" stroke="#c4a030" stroke-width="1" stroke-linejoin="round"/><path d="M12.5,2.2 V6.8 M10.2,4.5 H14.8" stroke="#b08a18" stroke-width="1.1"/></svg><div class="abs" style="left:504.40px;top:437px;height:18px;line-height:18px;white-space:nowrap;transform:scaleX(0.9813);transform-origin:0 0;">Java Working Set</div><svg class="abs" style="left:475px;top:437px" width="16" height="16" viewBox="0 0 16 16"><path d="M3.5,1 V6 Q3.5,8 1,8" fill="none" stroke="#2a5ab0" stroke-width="1.8"/><rect x="7.5" y="6.5" width="6" height="6" rx="1" fill="#fad98c" stroke="#c88a2a"/><rect x="4.5" y="9.5" width="7" height="6" rx="1" fill="#fad98c" stroke="#c88a2a"/><path d="M12.5,0.8 L16.2,4.5 L12.5,8.2 L8.8,4.5 Z" fill="#fff8d8" stroke="#c4a030" stroke-width="1" stroke-linejoin="round"/><path d="M12.5,2.2 V6.8 M10.2,4.5 H14.8" stroke="#b08a18" stroke-width="1.1"/></svg><div class="abs" style="left:503.38px;top:459px;height:18px;line-height:18px;white-space:nowrap;transform:scaleX(1.0217);transform-origin:0 0;">Folder</div><svg class="abs" style="left:475px;top:459px" width="16" height="16" viewBox="0 0 16 16"><path d="M1.5,14.5 V5 Q1.5,3.5 3,3.5 H6 L7.5,5.5 H13.5 V14.5 Z" fill="#fbd880" stroke="#c88a2a"/><path d="M2,7.5 H13" stroke="#fde8b8"/><path d="M12.5,0.8 L16.2,4.5 L12.5,8.2 L8.8,4.5 Z" fill="#fff8d8" stroke="#c4a030" stroke-width="1" stroke-linejoin="round"/><path d="M12.5,2.2 V6.8 M10.2,4.5 H14.8" stroke="#b08a18" stroke-width="1.1"/></svg><div class="abs hl" style="left:472px;top:478px;width:325px;height:22px"></div><div class="abs" style="left:503.44px;top:481px;height:18px;line-height:18px;white-space:nowrap;transform:scaleX(0.9565);transform-origin:0 0;">File</div><svg class="abs" style="left:475px;top:481px" width="16" height="16" viewBox="0 0 16 16"><path d="M3.5,2.5 H12.5 V15.5 H3.5 Z" fill="#eef2fa" stroke="#9a9080"/><path d="M12.5,0.8 L16.2,4.5 L12.5,8.2 L8.8,4.5 Z" fill="#fff8d8" stroke="#c4a030" stroke-width="1" stroke-linejoin="round"/><path d="M12.5,2.2 V6.8 M10.2,4.5 H14.8" stroke="#b08a18" stroke-width="1.1"/></svg><div class="abs" style="left:503.35px;top:503px;height:18px;line-height:18px;white-space:nowrap;transform:scaleX(1.0505);transform-origin:0 0;">Untitled Text File</div><svg class="abs" style="left:475px;top:503px" width="16" height="16" viewBox="0 0 16 16"><path d="M2.5,2.5 H10 V15.5 H2.5 Z" fill="#f0f4fa" stroke="#a09a80"/><path d="M4,5.5 H8 M4,7.5 H9 M4,9.5 H9 M4,11.5 H9 M4,13.5 H9" stroke="#4a6ab8"/><path d="M12.5,0.8 L16.2,4.5 L12.5,8.2 L8.8,4.5 Z" fill="#fff8d8" stroke="#c4a030" stroke-width="1" stroke-linejoin="round"/><path d="M12.5,2.2 V6.8 M10.2,4.5 H14.8" stroke="#b08a18" stroke-width="1.1"/></svg><div class="abs" style="left:504.40px;top:525px;height:18px;line-height:18px;white-space:nowrap;transform:scaleX(1.0194);transform-origin:0 0;">Android XML File</div><svg class="abs" style="left:475px;top:525px" width="16" height="16" viewBox="0 0 16 16"><path d="M2.5,1.5 H10 V15.5 H2.5 Z" fill="#e4eef6" stroke="#a8a8a0"/><path d="M6,8.5 H10 V13.5 H6 Q4.2,13.5 4.2,11 Q4.2,8.5 6,8.5 Z" fill="none" stroke="#20a040" stroke-width="1.1"/><path d="M12.5,0.8 L16.2,4.5 L12.5,8.2 L8.8,4.5 Z" fill="#fff0e0" stroke="#e88030" stroke-linejoin="round"/><path d="M12.5,2.2 V6.8 M10.2,4.5 H14.8" stroke="#e07020" stroke-width="1.1"/></svg><div class="abs" style="left:504.40px;top:547px;height:18px;line-height:18px;white-space:nowrap;transform:scaleX(0.9658);transform-origin:0 0;">JUnit Test Case</div><svg class="abs" style="left:475px;top:547px" width="16" height="16" viewBox="0 0 16 16"><path d="M1.5,3.5 H11.5 V15.5 H1.5 Z" fill="#eef4ee" stroke="#a0a088"/><path d="M4,5.5 V13.5 H8 M4,9.5 H7 M4,5.5 H7" fill="none" stroke="#1a9a50" stroke-width="1.1"/><path d="M9.5,9.5 V10.5 M9.5,12.5 V13.5" stroke="#1a9a50"/><path d="M12.5,0.8 L16.2,4.5 L12.5,8.2 L8.8,4.5 Z" fill="#fff8d8" stroke="#c4a030" stroke-width="1" stroke-linejoin="round"/><path d="M12.5,2.2 V6.8 M10.2,4.5 H14.8" stroke="#b08a18" stroke-width="1.1"/></svg><div class="sep" style="left:500px;top:569px;width:297px"></div><div class="abs" style="left:503.41px;top:576px;height:18px;line-height:18px;white-space:nowrap;transform:scaleX(0.9858);transform-origin:0 0;">Example...</div><svg class="abs" style="left:475px;top:576px" width="16" height="16" viewBox="0 0 16 16"><path d="M1.5,4.5 H13.5 V15.5 H1.5 Z" fill="#e4f2fc" stroke="#a08a50"/><rect x="2" y="5" width="11" height="2" fill="#3a7ad0"/><path d="M12.5,7 Q12.5,14 6,14.5" fill="none" stroke="#f4d050" stroke-width="1.1"/><path d="M12.5,0.8 L16.2,4.5 L12.5,8.2 L8.8,4.5 Z" fill="#fff8d8" stroke="#c4a030" stroke-width="1" stroke-linejoin="round"/><path d="M12.5,2.2 V6.8 M10.2,4.5 H14.8" stroke="#b08a18" stroke-width="1.1"/></svg><div class="sep" style="left:500px;top:598px;width:297px"></div><div class="abs" style="left:504.40px;top:605px;height:18px;line-height:18px;white-space:nowrap;transform:scaleX(1.0446);transform-origin:0 0;">Other...</div><div class="abs" style="left:728.70px;top:605px;height:18px;line-height:18px;white-space:nowrap;transform:scaleX(1.0458);transform-origin:0 0;">Ctrl+N</div><svg class="abs" style="left:475px;top:605px" width="16" height="16" viewBox="0 0 16 16"><path d="M1.5,4.5 H13.5 V15.5 H1.5 Z" fill="#e4f2fc" stroke="#a08a50"/><rect x="2" y="5" width="11" height="2" fill="#3a7ad0"/><path d="M12.5,7 Q12.5,14 6,14.5" fill="none" stroke="#f4d050" stroke-width="1.1"/><path d="M12.5,0.8 L16.2,4.5 L12.5,8.2 L8.8,4.5 Z" fill="#fff8d8" stroke="#c4a030" stroke-width="1" stroke-linejoin="round"/><path d="M12.5,2.2 V6.8 M10.2,4.5 H14.8" stroke="#b08a18" stroke-width="1.1"/></svg>
</body></html>
